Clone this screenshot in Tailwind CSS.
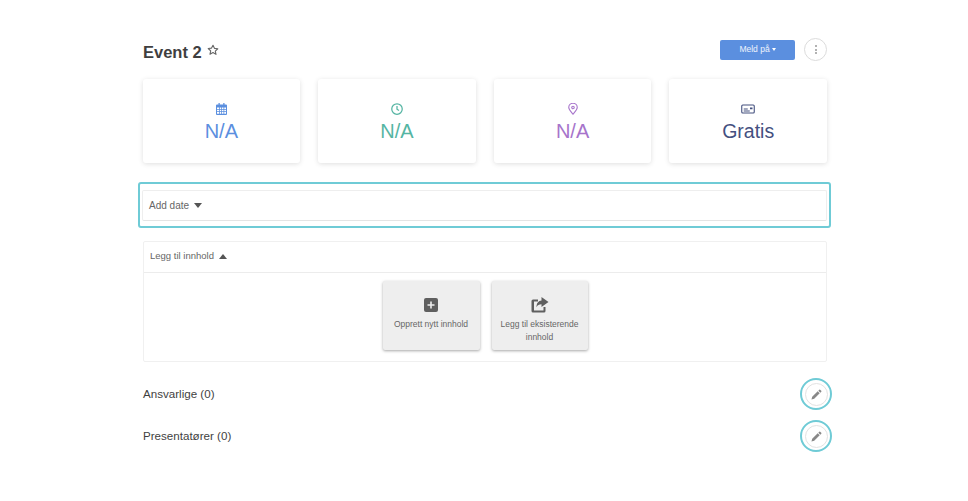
<!DOCTYPE html>
<html lang="en">
<head>
  <meta charset="UTF-8">
  <meta name="viewport" content="width=device-width, initial-scale=1.0">
  <title>Event 2</title>
  <script src="https://cdn.jsdelivr.net/npm/@tailwindcss/browser@4"></script>
</head>
<body class="bg-white font-['Liberation_Sans',Arial,sans-serif] text-[#333]">
  <div class="w-[968px] h-[501px] overflow-hidden pl-[143px] pr-[141px] pt-[38px]">

    <!-- Header -->
    <div class="flex items-center justify-between h-[23px]">
      <div class="flex items-center">
        <h1 class="text-[16.5px] font-bold text-[#3f3f3f] leading-none mt-[5px]">Event 2</h1>
        <svg class="ml-[5px] mt-[1px]" width="12" height="12" viewBox="0 0 24 24" fill="none" stroke="#666" stroke-width="2.200" stroke-linejoin="round"><path d="M12 2.500l2.900 6.200 6.700.8-5 4.600 1.400 6.700L12 17l-6 3.300 1.400-6.700-5-4.600 6.700-.8z"/></svg>
      </div>
      <div class="flex items-center gap-[9px]">
        <button class="w-[75px] h-[20px] bg-[#5b8fdf] rounded-[2px] text-white/90 text-[8.5px] flex items-center justify-center gap-[2px]">
          Meld på
          <span class="w-0 h-0 border-l-[2.500px] border-r-[2.500px] border-t-[3px] border-l-transparent border-r-transparent border-t-white"></span>
        </button>
        <button class="w-[23px] h-[23px] rounded-full border border-[#dcdcdc] flex flex-col items-center justify-center gap-[1.500px]">
          <span class="w-[2px] h-[2px] rounded-full bg-[#999]"></span>
          <span class="w-[2px] h-[2px] rounded-full bg-[#999]"></span>
          <span class="w-[2px] h-[2px] rounded-full bg-[#999]"></span>
        </button>
      </div>
    </div>

    <!-- Info cards -->
    <div class="grid grid-cols-4 gap-[18px] mt-[18px] -ml-[0.500px]">
      <div class="h-[84px] rounded-[3px] bg-white shadow-[0_1px_5px_rgba(0,0,0,0.13)] flex flex-col items-center pt-[24px] text-[#5b8fdf]">
        <svg width="11" height="12" viewBox="0 0 22 24" fill="currentColor"><path d="M5 0h2.500v3h7V0H17v3h3a2 2 0 0 1 2 2v17a2 2 0 0 1-2 2H2a2 2 0 0 1-2-2V5a2 2 0 0 1 2-2h3zM2 9v3h4V9zm5.500 0v3h3V9zm4.500 0v3h3V9zm4.500 0v3H20V9zM2 13.500v3h4v-3zm5.500 0v3h3v-3zm4.500 0v3h3v-3zm4.500 0v3H20v-3zM2 18v3.500h4V18zm5.500 0v3.500h3V18zm4.500 0v3.500h3V18zm4.500 0v3.500H20V18z" fill-rule="evenodd"/></svg>
        <div class="text-[20px] leading-[24px] mt-[4px]">N/A</div>
      </div>
      <div class="h-[84px] rounded-[3px] bg-white shadow-[0_1px_5px_rgba(0,0,0,0.13)] flex flex-col items-center pt-[24px] text-[#55b5a3]">
        <svg width="12" height="12" viewBox="0 0 24 24" fill="none" stroke="currentColor" stroke-width="2.500"><circle cx="12" cy="12" r="10.500"/><path d="M12 6v6.500l4 2.500"/></svg>
        <div class="text-[20px] leading-[24px] mt-[4px]">N/A</div>
      </div>
      <div class="h-[84px] rounded-[3px] bg-white shadow-[0_1px_5px_rgba(0,0,0,0.13)] flex flex-col items-center pt-[24px] text-[#a774cb]">
        <svg width="10" height="12" viewBox="0 0 20 24" fill="none" stroke="currentColor" stroke-width="2.200"><path d="M10 22.500C6 17.500 1.500 13.500 1.500 9a8.500 8.500 0 0 1 17 0c0 4.500-4.500 8.500-8.500 13.500z"/><circle cx="10" cy="9" r="2.500"/></svg>
        <div class="text-[20px] leading-[24px] mt-[4px]">N/A</div>
      </div>
      <div class="h-[84px] rounded-[3px] bg-white shadow-[0_1px_5px_rgba(0,0,0,0.13)] flex flex-col items-center pt-[24px] text-[#44507f]">
        <svg width="14" height="12" viewBox="0 0 28 24" fill="none" stroke="currentColor" stroke-width="2.200"><rect x="1.500" y="4" width="25" height="16" rx="2"/><path d="M5.500 12h8M5.500 16h12"/><rect x="18" y="9" width="5" height="3.500" fill="currentColor" stroke="none"/></svg>
        <div class="text-[19.500px] leading-[24px] mt-[4px]">Gratis</div>
      </div>
    </div>

    <!-- Add date -->
    <div class="mt-[19px] -ml-[5px] -mr-[4px] h-[46px] border-2 border-[#6fcbd6] rounded-[3px] pl-[2px] pr-[2px] pt-[6px]">
      <div class="h-[31px] border border-[#eeeeee] border-b-[#e4e4e4] rounded-[2px] flex items-center pl-[6px] text-[10px] text-[#666]">
        Add date
        <span class="ml-[5px] w-0 h-0 border-l-[4.500px] border-r-[4.500px] border-t-[5px] border-l-transparent border-r-transparent border-t-[#555]"></span>
      </div>
    </div>

    <!-- Add content panel -->
    <div class="mt-[13px] h-[121px] border border-[#f0f0f0] rounded-[2px]">
      <div class="h-[31px] border-b border-[#ececec] flex items-center pl-[6px] pb-[2px] text-[9.500px] text-[#666]">
        Legg til innhold
        <span class="ml-[5px] w-0 h-0 border-l-[4.500px] border-r-[4.500px] border-b-[5px] border-l-transparent border-r-transparent border-b-[#555]"></span>
      </div>
      <div class="flex justify-center gap-[12px] pt-[8px]">
        <div class="w-[97px] h-[69px] bg-[#eeeeee] rounded-[2px] shadow-[0_1px_3px_rgba(0,0,0,0.35)] flex flex-col items-center pt-[17px] text-[#666] text-[8.500px] leading-[13px] text-center">
          <svg width="14" height="14" viewBox="0 0 14 14"><rect width="14" height="14" rx="2" fill="#5f5f5f"/><path d="M7 3.500v7M3.500 7h7" stroke="#eee" stroke-width="1.600"/></svg>
          <div class="mt-[6px]">Opprett nytt innhold</div>
        </div>
        <div class="w-[96px] h-[69px] bg-[#eeeeee] rounded-[2px] shadow-[0_1px_3px_rgba(0,0,0,0.35)] flex flex-col items-center pt-[16px] px-[5px] text-[#666] text-[8.500px] leading-[13px] text-center">
          <svg width="18" height="16" viewBox="0 0 18 16"><path d="M2 2.500h5v2H3v9h9.500v-3.500h2V14a1.500 1.500 0 0 1-1.500 1.500H2A1.500 1.500 0 0 1 .5 14V4A1.500 1.500 0 0 1 2 2.500z" fill="#5f5f5f"/><path d="M10.500 0l7 5-7 5V7.200c-2.500 0-4 .8-5 3 0-4 2-6.500 5-6.700z" fill="#5f5f5f"/></svg>
          <div class="mt-[5px]">Legg til eksisterende innhold</div>
        </div>
      </div>
    </div>

    <!-- Ansvarlige -->
    <div class="flex items-center justify-between mt-[16px] h-[32px] -mr-[5px]">
      <span class="text-[11.600px] text-[#3f3f3f]">Ansvarlige (0)</span>
      <button class="w-[32px] h-[32px] rounded-full border-[2.500px] border-[#6fcbd6] flex items-center justify-center">
        <span class="w-[23px] h-[23px] rounded-full border border-[#e2e2e2] flex items-center justify-center">
          <svg width="11" height="11" viewBox="0 0 12 12" fill="#888"><path d="M0.500 11.500l0.800-3 6-6 2.200 2.200-6 6zM8 1.800l1-1a0.700 0.700 0 0 1 1 0l1.200 1.200a0.700 0.700 0 0 1 0 1l-1 1z"/></svg>
        </span>
      </button>
    </div>

    <!-- Presentatorer -->
    <div class="flex items-center justify-between mt-[10px] h-[32px] -mr-[5px]">
      <span class="text-[11.600px] text-[#3f3f3f]">Presentatører (0)</span>
      <button class="w-[32px] h-[32px] rounded-full border-[2.500px] border-[#6fcbd6] flex items-center justify-center">
        <span class="w-[23px] h-[23px] rounded-full border border-[#e2e2e2] flex items-center justify-center">
          <svg width="11" height="11" viewBox="0 0 12 12" fill="#888"><path d="M0.500 11.500l0.800-3 6-6 2.200 2.200-6 6zM8 1.800l1-1a0.700 0.700 0 0 1 1 0l1.200 1.200a0.700 0.700 0 0 1 0 1l-1 1z"/></svg>
        </span>
      </button>
    </div>

  </div>
</body>
</html>
